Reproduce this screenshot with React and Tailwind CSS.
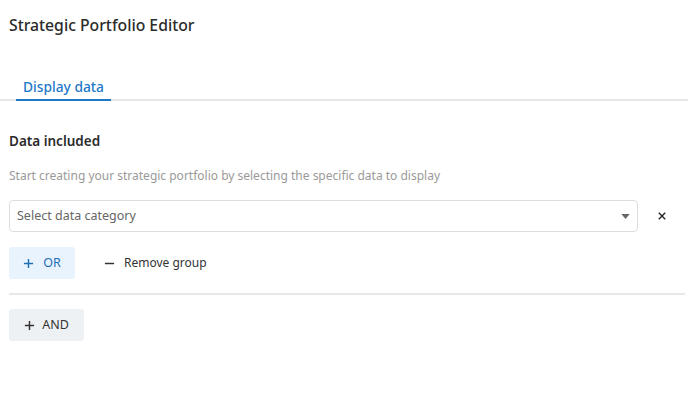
import React from "react";

const PlusIcon = ({ className }) => (
  <svg viewBox="0 0 12 12" className={className} fill="none" stroke="currentColor" strokeWidth="1.6">
    <path d="M6 1v10M1 6h10" />
  </svg>
);

const App = () => {
  return (
    <div
      className="min-h-screen w-[688px] bg-white text-[#333]"
      style={{ fontFamily: "'Noto Sans', 'Open Sans', sans-serif" }}
    >
      {/* Header */}
      <div className="pl-[9px] pt-[14px]">
        <h1 className="text-[15.75px] font-medium leading-[22px] text-[#2b2b2b]">Strategic Portfolio Editor</h1>
      </div>

      {/* Tabs */}
      <div className="mt-[41px] border-b-2 border-[#e8e8e8] pl-[16px]">
        <div className="-mb-[2px] w-[95px] border-b-2 border-[#1d78c8] pb-[2px] text-center text-[13.75px] font-medium leading-[20px] text-[#1d78c8]">
          Display data
        </div>
      </div>

      {/* Content */}
      <div className="pl-[9px] pr-[3px]">
        <h2 className="mt-[30px] text-[13.5px] font-semibold leading-[20px] text-[#2b2b2b]">Data included</h2>
        <p className="mt-[17px] text-[12px] leading-[16px] text-[#9a9a9a]">
          Start creating your strategic portfolio by selecting the specific data to display
        </p>

        <div className="mt-[16px] flex items-center">
          <div className="flex h-[32px] w-[629px] items-center justify-between rounded-[4px] border border-[#dedede] pl-[7px] pr-[7px]">
            <span className="text-[12.5px] text-[#666]">Select data category</span>
            <svg viewBox="0 0 10 6" className="h-[5px] w-[9px] text-[#666]" fill="currentColor">
              <path d="M0 0h10L5 6z" />
            </svg>
          </div>
          <button className="ml-[16px] flex h-[16px] w-[16px] items-center justify-center text-[#222]">
            <svg viewBox="0 0 10 10" className="h-[8px] w-[8px]" fill="none" stroke="currentColor" strokeWidth="1.7">
              <path d="M1 1l8 8M9 1l-8 8" />
            </svg>
          </button>
        </div>

        <div className="mt-[15px] flex items-center">
          <button className="flex h-[32px] w-[66px] items-center justify-center gap-[9px] rounded-[3px] bg-[#e9f3fd] text-[12.5px] text-[#1d6fb8]">
            <PlusIcon className="h-[11px] w-[11px]" />
            <span>OR</span>
          </button>
          <button className="ml-[29px] flex items-center gap-[9px] text-[12px] text-[#333]">
            <svg viewBox="0 0 12 12" className="h-[11px] w-[11px]" fill="none" stroke="currentColor" strokeWidth="1.6">
              <path d="M1 6h10" />
            </svg>
            <span>Remove group</span>
          </button>
        </div>

        <div className="mt-[14px] h-[2px] bg-[#e8e8e8]" />

        <button className="mt-[14px] flex h-[32px] w-[75px] items-center justify-center gap-[7px] rounded-[3px] bg-[#eef1f4] text-[12.5px] text-[#333]">
          <PlusIcon className="h-[11px] w-[11px]" />
          <span>AND</span>
        </button>
      </div>
    </div>
  );
};

export default App;
